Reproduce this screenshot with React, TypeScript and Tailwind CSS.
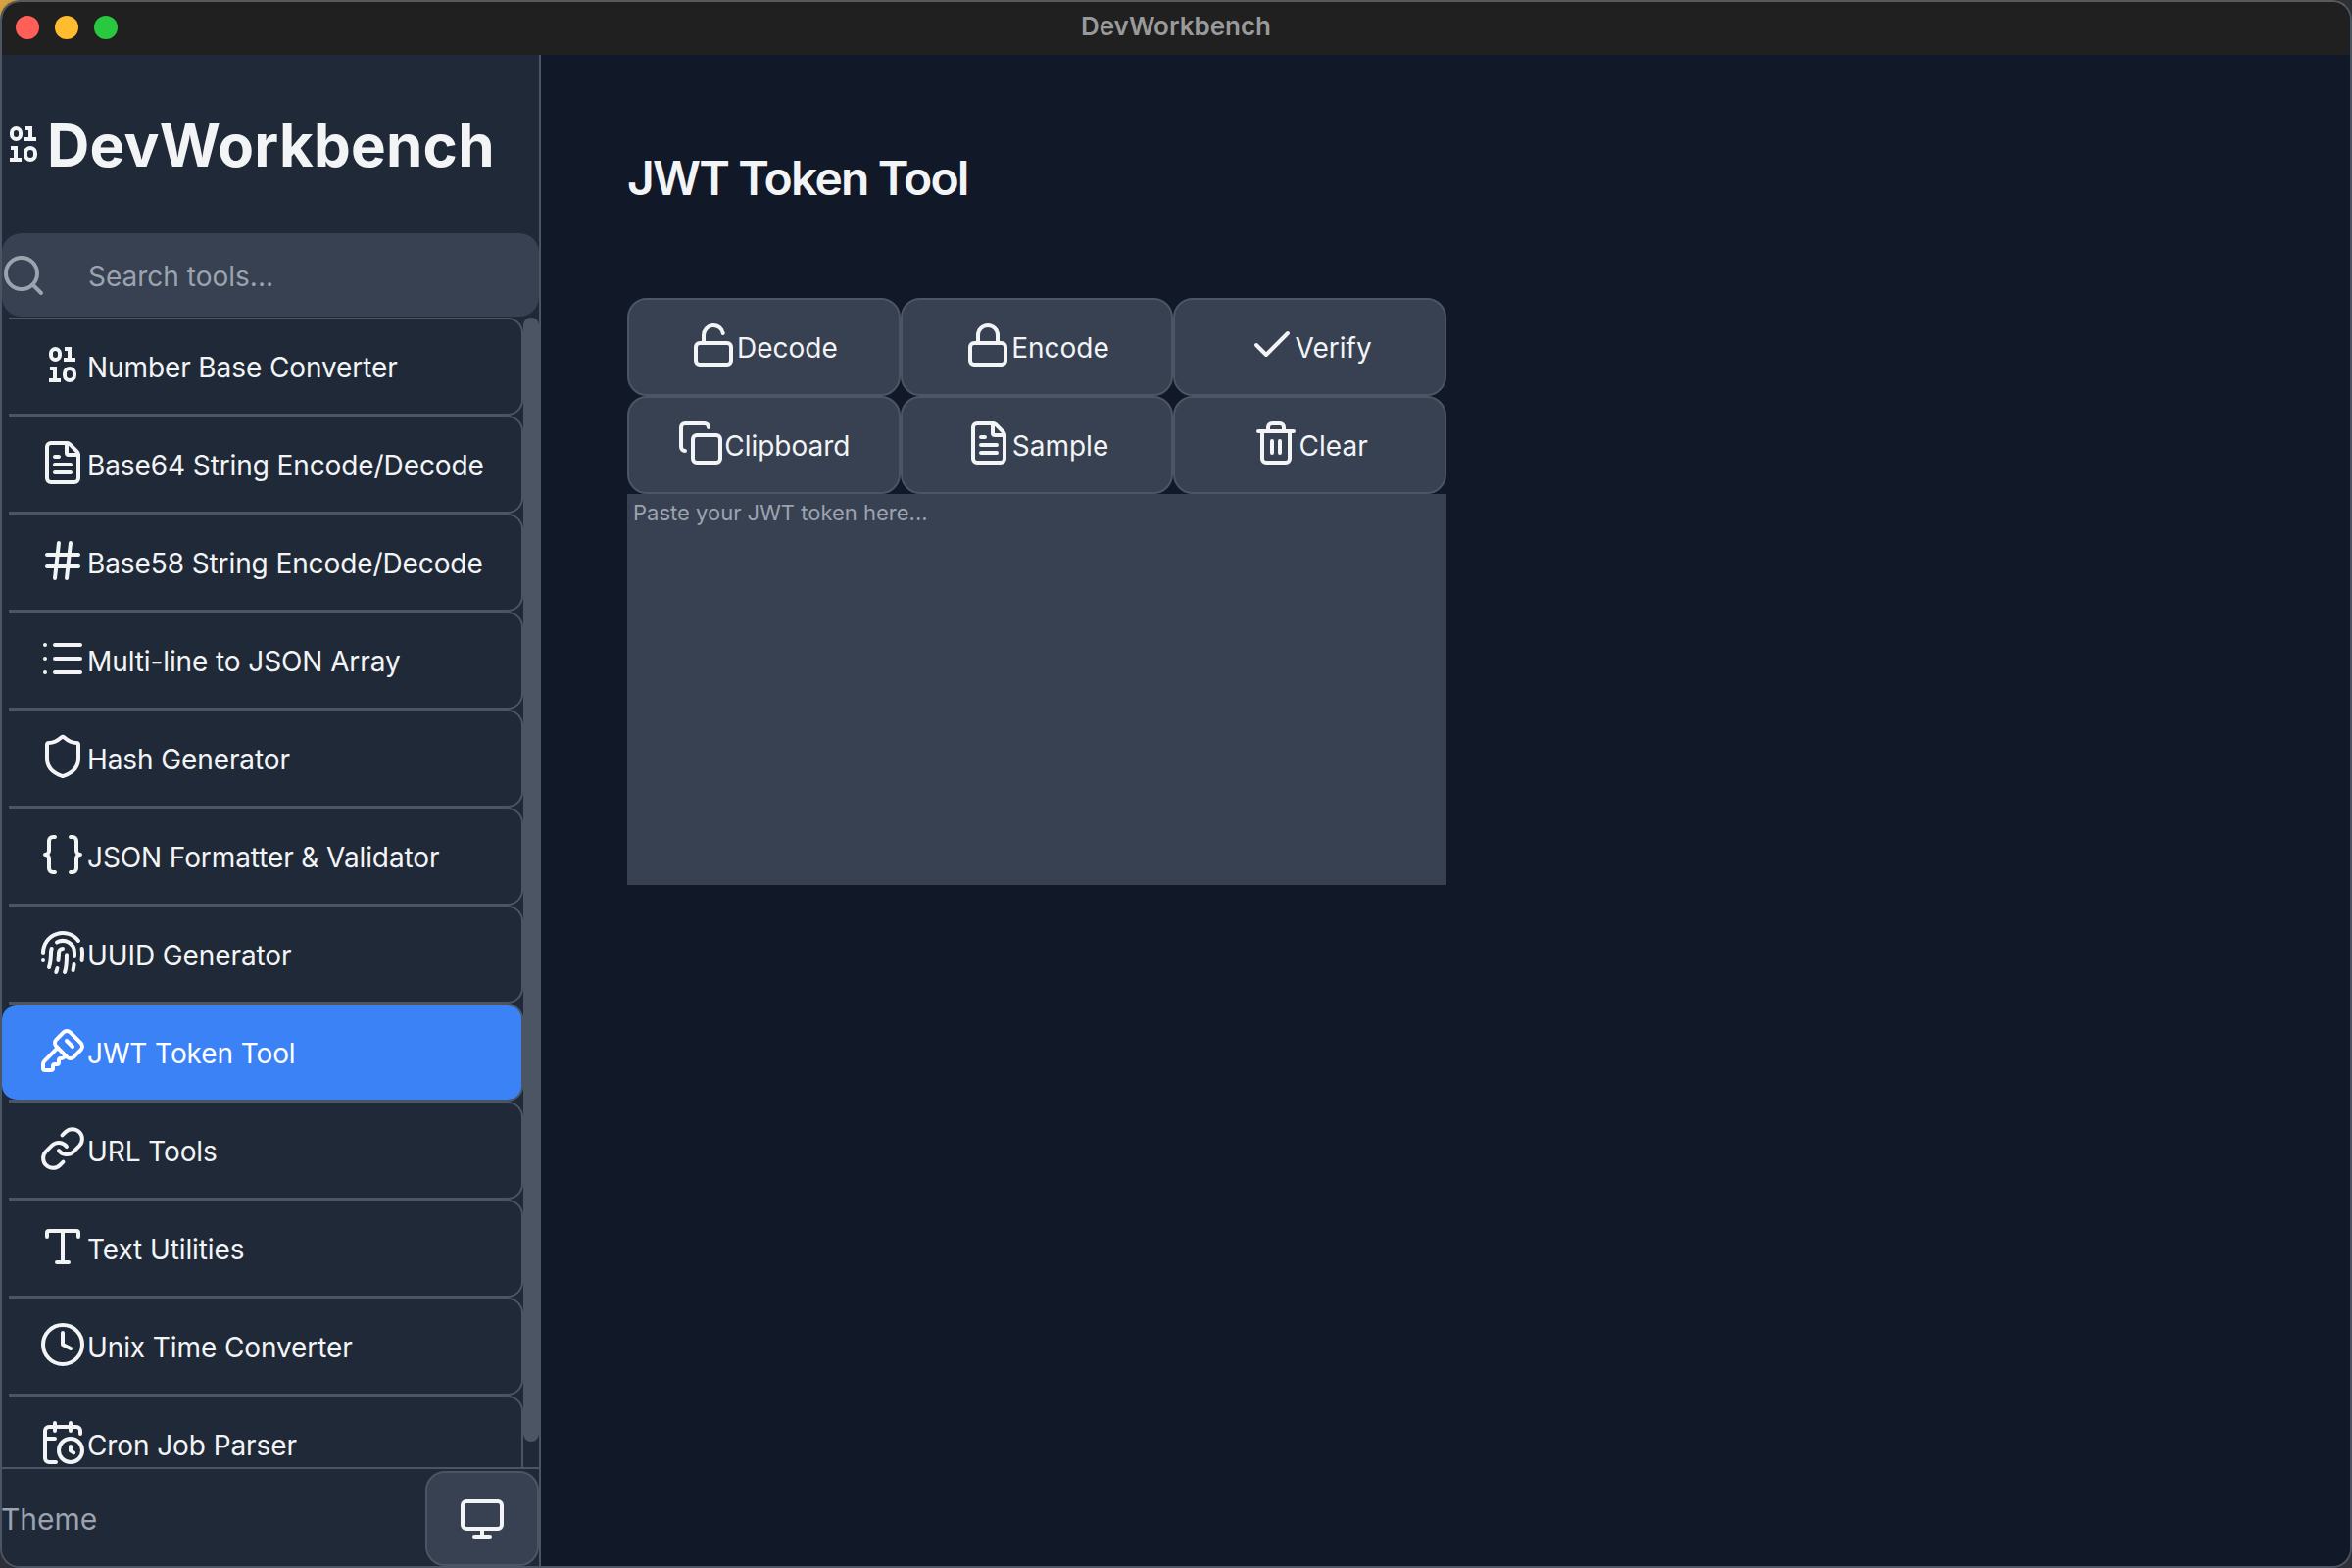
import React from 'react';
import {
  FileText,
  Hash,
  List,
  Shield,
  Braces,
  Fingerprint,
  KeySquare,
  Link,
  Type,
  Clock,
  CalendarClock,
  Monitor,
  LockOpen,
  Lock,
  Check,
  Copy,
  Trash2,
  Search,
} from 'lucide-react';

// lucide's binary is too thin here, the digits in the app are heavier
const BinaryIcon: React.FC<{ size?: number; className?: string }> = ({ size = 48, className }) => (
  <svg width={size} height={size} viewBox="0 0 48 48" fill="none" stroke="currentColor" strokeWidth="4" className={className}>
    <rect x="12" y="8" width="9" height="11" rx="4.5" />
    <path d="M26 8h5v11M25 19h12" />
    <path d="M11 28h5v12M10 40h12" />
    <rect x="26" y="28" width="10" height="12" rx="5" />
  </svg>
);

const tools = [
  { name: 'Number Base Converter', icon: BinaryIcon },
  { name: 'Base64 String Encode/Decode', icon: FileText },
  { name: 'Base58 String Encode/Decode', icon: Hash },
  { name: 'Multi-line to JSON Array', icon: List },
  { name: 'Hash Generator', icon: Shield },
  { name: 'JSON Formatter & Validator', icon: Braces },
  { name: 'UUID Generator', icon: Fingerprint },
  { name: 'JWT Token Tool', icon: KeySquare, active: true },
  { name: 'URL Tools', icon: Link },
  { name: 'Text Utilities', icon: Type },
  { name: 'Unix Time Converter', icon: Clock },
  { name: 'Cron Job Parser', icon: CalendarClock },
];

const actions = [
  { label: 'Decode', icon: LockOpen },
  { label: 'Encode', icon: Lock },
  { label: 'Verify', icon: Check },
  { label: 'Clipboard', icon: Copy },
  { label: 'Sample', icon: FileText },
  { label: 'Clear', icon: Trash2 },
];

const App: React.FC = () => {
  return (
    <div className="w-[2400px] h-[1600px] overflow-hidden bg-[linear-gradient(135deg,#d9a441_0%,#2e3036_6%)] font-['Inter',sans-serif]">
      <div className="w-full h-full flex flex-col overflow-hidden rounded-[20px] border-2 border-t-[#5a5a5a] border-x-[#4b5563] border-b-[#4b5563]">
        {/* Title bar */}
        <div className="h-[54px] shrink-0 flex items-center bg-[#202020]">
          <div className="flex gap-4 pl-[14px] pb-[2px]">
            <span className="w-6 h-6 rounded-full bg-[#ff5f57]"></span>
            <span className="w-6 h-6 rounded-full bg-[#febc2e]"></span>
            <span className="w-6 h-6 rounded-full bg-[#28c840]"></span>
          </div>
          <div className="flex-1 text-center pr-[118px] pb-[6px] text-[26px] font-semibold text-[#9a9a9a]">DevWorkbench</div>
        </div>

        <div className="flex-1 flex min-h-0">
          {/* Sidebar */}
          <aside className="w-[550px] shrink-0 flex flex-col bg-[#1f2937] border-r-2 border-[#4b5563]">
            <div className="h-[182px] shrink-0 flex items-center text-[#f3f4f6]">
              <BinaryIcon size={48} className="shrink-0 -ml-[2px]" />
              <h1 className="text-[60px] font-bold tracking-[0.25px] leading-none pt-[2px]">DevWorkbench</h1>
            </div>

            <div className="h-[85px] shrink-0 flex items-center bg-[#374151] rounded-[20px]">
              <Search size={48} className="text-[#9ca3af] shrink-0 -ml-[2px]" />
              <span className="ml-[42px] pt-[2px] text-[28px] text-[#9ca3af]">Search tools...</span>
            </div>

            <div className="flex-1 min-h-0 flex overflow-hidden mt-[1px]">
              <div className="flex-1 min-w-0">
                {tools.map((tool) => {
                  const Icon = tool.icon;
                  return (
                    <div
                      key={tool.name}
                      className={`relative h-[100px] flex items-center pl-[38px] rounded-[16px] border-y-2 border-transparent bg-clip-padding text-[28px] tracking-[-0.1px] before:absolute before:-inset-y-[2px] before:left-[7px] before:right-0 before:rounded-r-[16px] before:border-y-2 before:border-r-2 before:border-[#4b5563] ${
                        tool.active ? 'bg-[#3b82f6] text-white' : 'text-[#f3f4f6]'
                      }`}
                    >
                      <Icon size={48} className="shrink-0 mb-1" />
                      <span className="ml-[1px] pt-[2px]">{tool.name}</span>
                    </div>
                  );
                })}
              </div>
              <div className="w-[16px] shrink-0">
                <div className="h-[1147px] rounded-full bg-[#4b5563]"></div>
              </div>
            </div>

            <div className="h-[101px] shrink-0 flex items-end justify-between border-t-2 border-[#4b5563]">
              <span className="self-center pt-[4px] -ml-[1px] text-[30px] text-[#9ca3af]">Theme</span>
              <div className="w-[116px] h-[97px] flex items-center justify-center rounded-[20px] bg-[#374151] border-2 border-[#4b5563] text-[#f3f4f6]">
                <Monitor size={48} />
              </div>
            </div>
          </aside>

          {/* Main */}
          <main className="flex-1 min-w-0 bg-[#111827] pl-[88px]">
            <h2 className="mt-[90px] text-[48px] tracking-[-1.8px] leading-[72px] font-semibold text-[#f3f4f6]">JWT Token Tool</h2>
            <div className="w-[836px] mt-[86px]">
              <div className="grid grid-cols-3">
                {actions.map((action) => {
                  const Icon = action.icon;
                  return (
                    <button
                      key={action.label}
                      className="h-[100px] flex items-center justify-center rounded-[20px] bg-[#374151] border-2 border-[#4b5563] text-[28px] text-[#f3f4f6]"
                    >
                      <Icon size={48} className="shrink-0 mb-1" />
                      <span className="pt-[2px]">{action.label}</span>
                    </button>
                  );
                })}
              </div>
              <div className="h-[399px] bg-[#374151] px-[6px] py-[4px] text-[22px] leading-[30px] text-[#9ca3af]">
                Paste your JWT token here...
              </div>
            </div>
          </main>
        </div>
      </div>
    </div>
  );
};

export default App;
